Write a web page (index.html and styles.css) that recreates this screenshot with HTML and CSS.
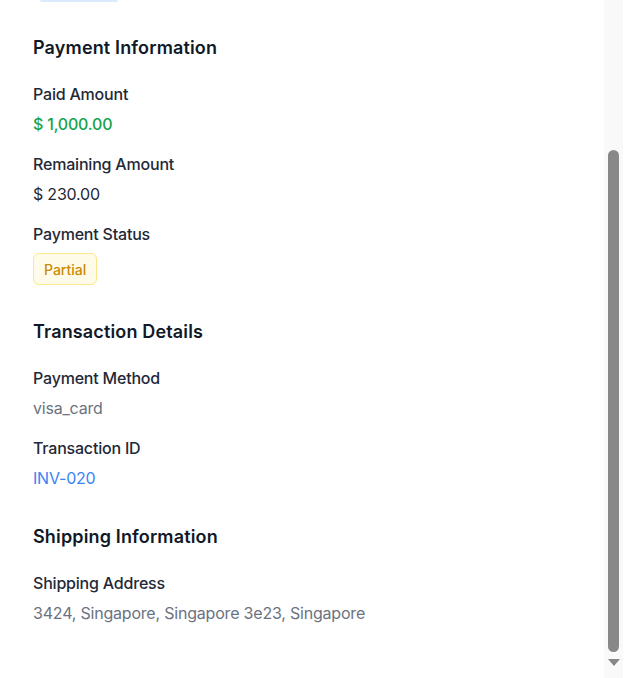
FILE: index.html
```html
<!DOCTYPE html>
<html>
<head>
<meta charset="utf-8">
<link rel="stylesheet" href="styles.css">
</head>
<body>
<div class="frame">
  <div class="content">
    <div class="top-pill"></div>
    <section class="section first">
      <h2 class="heading">Payment Information</h2>
      <div class="field">
        <div class="label">Paid Amount</div>
        <div class="value green">$ 1,000.00</div>
      </div>
      <div class="field">
        <div class="label">Remaining Amount</div>
        <div class="value dark">$ 230.00</div>
      </div>
      <div class="field">
        <div class="label">Payment Status</div>
        <div class="badge-row"><span class="badge">Partial</span></div>
      </div>
    </section>
    <section class="section">
      <h2 class="heading">Transaction Details</h2>
      <div class="field">
        <div class="label">Payment Method</div>
        <div class="value muted">visa_card</div>
      </div>
      <div class="field">
        <div class="label">Transaction ID</div>
        <div class="value blue">INV-020</div>
      </div>
    </section>
    <section class="section last">
      <h2 class="heading">Shipping Information</h2>
      <div class="field">
        <div class="label">Shipping Address</div>
        <div class="value muted">3424, Singapore, Singapore 3e23, Singapore</div>
      </div>
    </section>
  </div>
  <div class="scrollbar">
    <div class="track-space"></div>
    <div class="thumb"></div>
    <div class="arrow"></div>
  </div>
  <div class="edge"></div>
</div>
</body>
</html>
```
FILE: styles.css
```css
* { box-sizing: border-box; }
html, body { margin: 0; padding: 0; background: #fff; }
body {
  font-family: Inter, Roboto, "Noto Sans", sans-serif;
  color: #1f2937;
}
.frame {
  display: flex;
  width: 630px;
  height: 678px;
  overflow: hidden;
}
.content {
  flex: 0 0 604px;
  padding: 0 0 0 33px;
}
.top-pill {
  width: 78px;
  height: 2px;
  margin-left: 7px;
  background: #dbeafe;
  border-radius: 0 0 6px 6px;
}
.section {
  display: flex;
  flex-direction: column;
}
.heading {
  margin: 35px 0 0;
  font-size: 18px;
  font-weight: 600;
  color: #111827;
  line-height: 24px;
  letter-spacing: 0.15px;
}
.first .heading { margin-top: 34px; }
.last .heading { margin-top: 36px; }
.field { display: flex; flex-direction: column; }
.heading + .field { margin-top: 23px; }
.field + .field { margin-top: 18px; }
.label {
  font-size: 16px;
  font-weight: 500;
  line-height: 22px;
  color: #1f2937;
  letter-spacing: -0.2px;
}
.value {
  margin-top: 8px;
  font-size: 16px;
  line-height: 22px;
  letter-spacing: -0.2px;
}
.green { color: #16a34a; font-weight: 500; }
.dark { color: #1f2937; }
.muted { color: #6b7280; }
.blue { color: #3b82f6; }
.badge-row { margin-top: 8px; display: flex; }
.badge {
  display: inline-flex;
  align-items: center;
  height: 32px;
  padding: 0 10px;
  background: #fefce8;
  border: 1px solid #fde68a;
  border-radius: 6px;
  color: #ca8a04;
  font-size: 14px;
  font-weight: 500;
}
.scrollbar {
  flex: 0 0 19px;
  background: #f9f9f9;
  display: flex;
  flex-direction: column;
  align-items: center;
}
.track-space { height: 150px; }
.thumb {
  width: 11px;
  height: 502px;
  background: #888;
  border-radius: 6px;
}
.arrow {
  margin-top: 7px;
  width: 0;
  height: 0;
  border-left: 6px solid transparent;
  border-right: 6px solid transparent;
  border-top: 7px solid #888;
}
.edge { flex: 1; background: #fff; }
```
